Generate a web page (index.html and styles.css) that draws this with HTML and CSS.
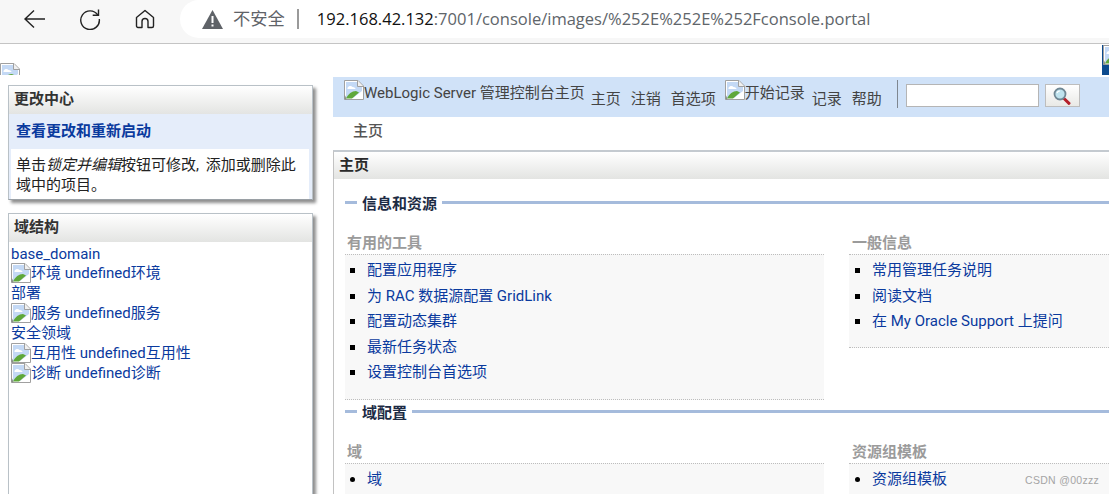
FILE: index.html
```html
<!DOCTYPE html>
<html lang="zh-CN">
<head>
<meta charset="utf-8">
<title>WebLogic Server 管理控制台</title>
<link rel="stylesheet" href="styles.css">
</head>
<body>
<svg class="defs" width="0" height="0" aria-hidden="true">
  <symbol id="broken" viewBox="0 0 20 20">
    <path d="M.5.5H14L19.500 6V19.500H.5Z" fill="#fff" stroke="#a0a0a0"/>
    <path d="M2 2H13.500L18 6.500V11L9 18H2Z" fill="#c4d9f5"/>
    <path d="M3.500 8c1-2.500 4-2.500 5-1 2 0 3 1 3 2H3.500Z" fill="#fff"/>
    <path d="M13.500.8V6.500H19" fill="#f0f0f0" stroke="#a0a0a0"/>
    <path d="M2 18.500c2-4.500 6-7.500 10-7.500l3 1.500-7 6Z" fill="#5fa83a"/>
    <path d="M.5 19.500V15c1 1 1.500 2 2 4.500Z" fill="#8a8f88"/>
  </symbol>
</svg>
<header class="browser">
  <nav class="nav-buttons">
    <svg class="back" width="24" height="20" viewBox="0 0 24 20"><path d="M11 1.500 2 10l9 8.500M2 10h20" fill="none" stroke="#222" stroke-width="1.400"/></svg>
    <svg class="reload" width="22" height="22" viewBox="0 0 22 22"><path d="M18.800 7A9.300 9.300 0 1 0 20.300 11" fill="none" stroke="#222" stroke-width="1.400"/><path d="M19.500 1.500V7.300H13.700" fill="none" stroke="#222" stroke-width="1.400"/></svg>
    <svg class="home" width="20" height="20" viewBox="0 0 20 20"><path d="M1.500 8.500 10 1.500l8.500 7V17a1.500 1.500 0 0 1-1.500 1.500H13V12.500a3 3 0 0 0-6 0V18.500H3A1.500 1.500 0 0 1 1.500 17Z" fill="none" stroke="#222" stroke-width="1.400" stroke-linejoin="round"/></svg>
  </nav>
  <div class="address">
    <svg class="warn" width="21" height="19" viewBox="0 0 21 19"><path d="M10.500 0 21 19H0Z" fill="#5f6368"/><path d="M9.500 6h2v7h-2zM9.500 14.500h2v2h-2z" fill="#fff"/></svg>
    <span class="insecure">不安全</span>
    <span class="divider"></span>
    <span class="url"><span class="host">192.168.42.132</span>:7001/console/images/%252E%252E%252Fconsole.portal</span>
  </div>
</header>

<div class="banner">
  <svg class="icon banner-icon"><use href="#broken"/></svg>
  <div class="brand"><svg class="icon"><use href="#broken"/></svg></div>
</div>

<div class="layout">
  <aside class="side">
    <section class="panel">
      <h2 class="panel-title">更改中心</h2>
      <div class="change-body">
        <a class="change-link" href="#">查看更改和重新启动</a>
        <p class="change-text">单击<em>锁定并编辑</em>按钮可修改, 添加或删除此<br>域中的项目。</p>
      </div>
    </section>
    <section class="panel tree-panel">
      <h2 class="panel-title">域结构</h2>
      <div class="tree">
        <a href="#" class="tree-row">base_domain</a>
        <a href="#" class="tree-row"><svg class="icon"><use href="#broken"/></svg>环境 undefined环境</a>
        <a href="#" class="tree-row">部署</a>
        <a href="#" class="tree-row"><svg class="icon"><use href="#broken"/></svg>服务 undefined服务</a>
        <a href="#" class="tree-row">安全领域</a>
        <a href="#" class="tree-row"><svg class="icon"><use href="#broken"/></svg>互用性 undefined互用性</a>
        <a href="#" class="tree-row"><svg class="icon"><use href="#broken"/></svg>诊断 undefined诊断</a>
      </div>
    </section>
  </aside>

  <main class="content">
    <div class="toolbar">
      <span class="tool-image"><svg class="icon"><use href="#broken"/></svg>WebLogic Server 管理控制台主页</span>
      <a class="tool-link" href="#">主页</a>
      <a class="tool-link" href="#">注销</a>
      <a class="tool-link" href="#">首选项</a>
      <span class="tool-image record"><svg class="icon"><use href="#broken"/></svg>开始记录</span>
      <a class="tool-link" href="#">记录</a>
      <a class="tool-link" href="#">帮助</a>
      <span class="tool-sep"></span>
      <input class="search-input" type="text" aria-label="搜索">
      <button class="search-button" type="button" aria-label="搜索">
        <svg width="20" height="18" viewBox="0 0 20 18"><path d="M12 11.500l5 4.800" stroke="#b5202a" stroke-width="3" stroke-linecap="round"/><circle cx="8" cy="7" r="5.500" fill="#bfe3ee" stroke="#6f8794" stroke-width="1.800"/><path d="M5 6a3 3 0 0 1 3-2" fill="none" stroke="#fff" stroke-width="1.200"/></svg>
      </button>
    </div>
    <div class="crumb">主页</div>
    <section class="home-panel">
      <h2 class="panel-title home-title">主页</h2>
      <div class="home-body">
        <h3 class="section-head"><span>信息和资源</span></h3>
        <div class="columns">
          <div class="col-main">
            <h4 class="sub-head">有用的工具</h4>
            <ul class="link-list tools">
              <li><a href="#">配置应用程序</a></li>
              <li><a href="#">为 RAC 数据源配置 GridLink</a></li>
              <li><a href="#">配置动态集群</a></li>
              <li><a href="#">最新任务状态</a></li>
              <li><a href="#">设置控制台首选项</a></li>
            </ul>
          </div>
          <div class="col-aside">
            <h4 class="sub-head">一般信息</h4>
            <ul class="link-list">
              <li><a href="#">常用管理任务说明</a></li>
              <li><a href="#">阅读文档</a></li>
              <li><a href="#">在 My Oracle Support 上提问</a></li>
            </ul>
          </div>
        </div>
        <h3 class="section-head second"><span>域配置</span></h3>
        <div class="columns">
          <div class="col-main">
            <h4 class="sub-head">域</h4>
            <ul class="link-list discs"><li><a href="#">域</a></li></ul>
          </div>
          <div class="col-aside">
            <h4 class="sub-head">资源组模板</h4>
            <ul class="link-list discs"><li><a href="#">资源组模板</a></li></ul>
          </div>
        </div>
      </div>
    </section>
  </main>
</div>
<div class="watermark">CSDN @00zzz</div>
</body>
</html>
```
FILE: styles.css
```css
* { box-sizing: border-box; }
html, body { margin: 0; height: 494px; overflow: hidden; }
body {
  position: relative;
  background: #fff;
  color: #222;
  font: 15px/20px Roboto, "Noto Sans CJK SC", sans-serif;
}
a { color: #0a3a9e; text-decoration: none; }
h2, h3, h4, p, ul { margin: 0; padding: 0; }
.defs { position: absolute; }
.icon { width: 20px; height: 20px; flex: none; display: inline-block; vertical-align: top; }

.browser {
  height: 44px;
  display: flex;
  background: #f7f7f7;
  border-bottom: 1px solid #c4c4c4;
  font-family: "Open Sans", "Noto Sans CJK SC", sans-serif;
}
.nav-buttons { width: 180px; display: flex; align-items: center; padding: 0 0 5px 23px; flex: none; }
.back { margin-right: 32px; }
.reload { margin-right: 34px; }
.address {
  flex: 1;
  height: 38px;
  background: #fff;
  border-radius: 19px 0 0 19px;
  display: flex;
  align-items: center;
  padding-left: 22px;
  font-size: 16.530px;
}
.warn { flex: none; margin-right: 10px; }
.insecure { color: #5f6368; font-size: 17.300px; }
.divider { width: 2px; height: 20px; background: #9a9a9a; margin: 0 18px 0 12px; }
.url { color: #60656a; white-space: nowrap; }
.host { color: #111; }

.banner { height: 31px; display: flex; justify-content: space-between; overflow: hidden; }
.banner-icon { margin-top: 19px; }
.brand { width: 7px; margin-top: 1px; height: 30px; background: #0b4a8e; padding-left: 1px; overflow: hidden; }

.layout { display: flex; }
.side { width: 333px; flex: none; padding: 10px 0 0 8px; }
.panel {
  width: 305px;
  border: 1px solid #b9c1c7;
  border-bottom-color: #9aa0a5;
  box-shadow: 3px 3px 3px #8f8f8f;
  background: #fff;
}
.panel-title {
  height: 28px;
  padding-left: 5px;
  font-size: 15px;
  font-weight: 700;
  line-height: 26px;
  color: #333;
  background: linear-gradient(#fff, #e3e4e2);
}
.change-body { background: #e5edfa; padding: 0 3px 0 2px; }
.change-link { display: block; height: 35px; padding-left: 5px; line-height: 35px; font-weight: 700; }
.change-text { background: #fff; padding: 6px 0 4px 5px; height: 50px; color: #222; word-spacing: 3px; }
.change-text em { font-style: italic; }
.tree-panel { margin-top: 13px; height: 300px; }
.tree { padding: 1px 2px; }
.tree-row { display: flex; height: 20px; white-space: pre; line-height: 20px; }
.tree-row:first-child { padding-top: 1px; }

.content { flex: 1; min-width: 0; padding-top: 2px; }
.toolbar {
  height: 40px;
  background: #d0e2f8;
  padding-left: 11px;
  display: flex;
  align-items: flex-start;
  white-space: nowrap;
  color: #444;
}
.tool-image { display: flex; margin-top: 3px; line-height: 27px; height: 30px; color: #444; }
.tool-link { color: #444; margin-left: 10px; margin-top: 12px; line-height: 20px; }
.tool-link:first-of-type { margin-left: 6px; }
.record { margin-left: 9px; }
.record + .tool-link { margin-left: 7px; }
.tool-sep { width: 1px; height: 28px; background: #7f8790; margin: 3px 8px 0 15px; }
.search-input { width: 133px; height: 23px; margin-top: 7px; border: 1px solid #b5b5b5; background: #fff; padding: 0; }
.search-button {
  width: 35px; height: 23px; margin: 7px 0 0 6px; padding: 2px 0 0;
  border: 1px solid #bdbdbd;
  background: linear-gradient(#fff, #e9e9e6);
}
.crumb { height: 33px; padding: 4px 0 0 20px; font-weight: 500; color: #555; line-height: 20px; }
.home-panel { border-left: 1px solid #c2c2c2; border-top: 2px solid #c4cad0; }
.home-title { height: 27px; padding-left: 5px; color: #2a2a2a; }
.home-body { padding-left: 11px; }
.section-head {
  display: flex;
  align-items: center;
  height: 20px;
  margin-top: 15px;
  font-size: 15px;
  font-weight: 700;
  line-height: 18px;
  color: #1c2b44;
  background: linear-gradient(#a5bbdc, #a5bbdc) 0 7px / 100% 3px no-repeat;
}
.section-head span { background: #fff; margin-left: 12px; padding: 0 5px; }
.section-head.second { margin-top: 3px; }
.columns { display: grid; grid-template-columns: 479px 1fr; column-gap: 25px; margin-top: 19px; }
.sub-head { padding-left: 2px; font-size: 15px; font-weight: 700; color: #9b9b9b; height: 21px; line-height: 20px; }
.col-aside .sub-head { padding-left: 3px; }
.link-list {
  list-style: none;
  background: #f8f8f8;
  border-top: 1px dotted #bdbdbd;
  border-bottom: 1px dotted #bdbdbd;
  padding: 3px 0 14px 5px;
}
.col-aside .link-list { padding-left: 6px; }
.link-list li { display: flex; align-items: center; height: 25.500px; line-height: 25px; }
.link-list li::before { content: ""; flex: none; width: 5px; height: 5px; margin: 0 12px 0 0; background: #000; }
.discs li::before { border-radius: 50%; }
.tools { height: 146px; }
.col-aside .link-list:not(.discs) { height: 94px; }
.watermark {
  position: absolute;
  left: 1025px;
  top: 473px;
  font: 10.500px/14px "Liberation Sans", sans-serif;
  letter-spacing: .3px;
  color: #a5a5a5;
}
```
